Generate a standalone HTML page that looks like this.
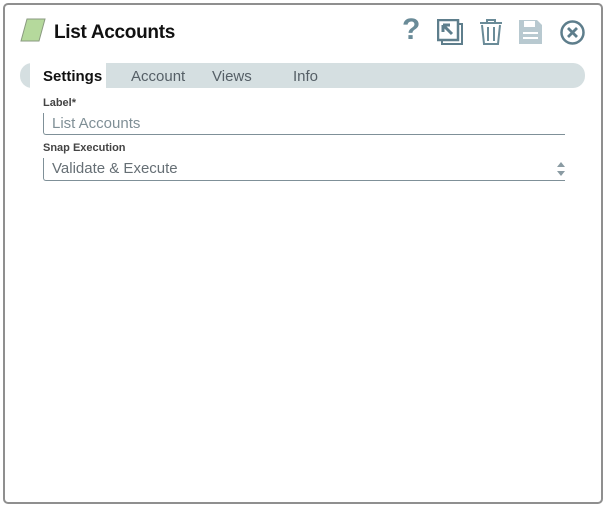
<!DOCTYPE html>
<html><head><style>
body{margin:0;width:604px;height:506px;background:#fff;font-family:"Liberation Sans",sans-serif;overflow:hidden;position:relative}
.frame{position:absolute;left:3px;top:3px;width:596px;height:497px;border:2px solid #8f8f8f;border-radius:5px;background:#fff}
.t{position:absolute}
</style></head><body>
<div class="frame"></div>
<svg class="t" style="left:20px;top:18px" width="26" height="24"><polygon points="7,1 25,1 19,23 1,23" fill="#b5d99c" stroke="#8a9a80" stroke-width="1"/></svg>
<div class="t" style="left:54px;top:22px;font-size:19px;color:#111;font-weight:bold;letter-spacing:-0.3px">List Accounts</div>
<div class="t" style="left:402px;top:13px;font-size:30px;font-weight:bold;color:#6a8b98">?</div>
<svg class="t" style="left:437px;top:19px" width="27" height="27"><rect x="5" y="5" width="20" height="20" fill="none" stroke="#5e7e8c" stroke-width="2"/><rect x="1" y="1" width="20" height="20" fill="#fff" stroke="#5e7e8c" stroke-width="2.5"/><path d="M6 6 L15 15 M6 6 h7 M6 6 v7" stroke="#5e7e8c" stroke-width="3" fill="none"/></svg>
<svg class="t" style="left:479px;top:19px" width="24" height="26"><path d="M1 4 H23 M8 4 V1 H16 V4" stroke="#6a8b98" stroke-width="2" fill="none"/><path d="M3 6 L5 25 H19 L21 6" stroke="#6a8b98" stroke-width="2" fill="none"/><path d="M9 8 V22 M15 8 V22" stroke="#6a8b98" stroke-width="2"/></svg>
<svg class="t" style="left:518px;top:19px" width="25" height="26"><path d="M1 1 H19 L24 6 V25 H1 Z" fill="#b8c9d0"/><rect x="6" y="2" width="11" height="6" fill="#fff"/><rect x="5" y="13" width="15" height="2" fill="#fff"/><rect x="5" y="18" width="15" height="2" fill="#fff"/></svg>
<svg class="t" style="left:560px;top:20px" width="25" height="25"><circle cx="12.5" cy="12.5" r="11" fill="none" stroke="#5e7e8c" stroke-width="2.5"/><path d="M8 8 L17 17 M17 8 L8 17" stroke="#5e7e8c" stroke-width="2.8"/></svg>
<div class="t" style="left:20px;top:63px;width:565px;height:25px;background:#d5dfe1;border-radius:12px"></div>
<div class="t" style="left:30px;top:63px;width:76px;height:25px;background:#fff"></div>
<div class="t" style="left:43px;top:68px;font-size:15px;font-weight:bold;color:#111">Settings</div>
<div class="t" style="left:131px;top:68px;font-size:15px;color:#555f66">Account</div>
<div class="t" style="left:212px;top:68px;font-size:15px;color:#555f66">Views</div>
<div class="t" style="left:293px;top:68px;font-size:15px;color:#555f66">Info</div>
<div class="t" style="left:43px;top:97px;font-size:11px;font-weight:bold;color:#444">Label*</div>
<div class="t" style="left:43px;top:113px;width:521px;height:21px;border-left:1px solid #7f9098;border-bottom:1px solid #7f9098;border-radius:0 0 0 3px"></div>
<div class="t" style="left:52px;top:115px;font-size:15px;color:#7f8f96">List Accounts</div>
<div class="t" style="left:43px;top:142px;font-size:11px;font-weight:bold;color:#444">Snap Execution</div>
<div class="t" style="left:43px;top:158px;width:521px;height:22px;border-left:1px solid #7f9098;border-bottom:1px solid #7f9098;border-radius:0 0 0 3px"></div>
<div class="t" style="left:52px;top:160px;font-size:15px;color:#666f75">Validate &amp; Execute</div>
<svg class="t" style="left:556px;top:161px" width="10" height="16"><path d="M1 6 L5 1 L9 6 Z M1 10 L5 15 L9 10 Z" fill="#8a9ba3"/></svg>
</body></html>
